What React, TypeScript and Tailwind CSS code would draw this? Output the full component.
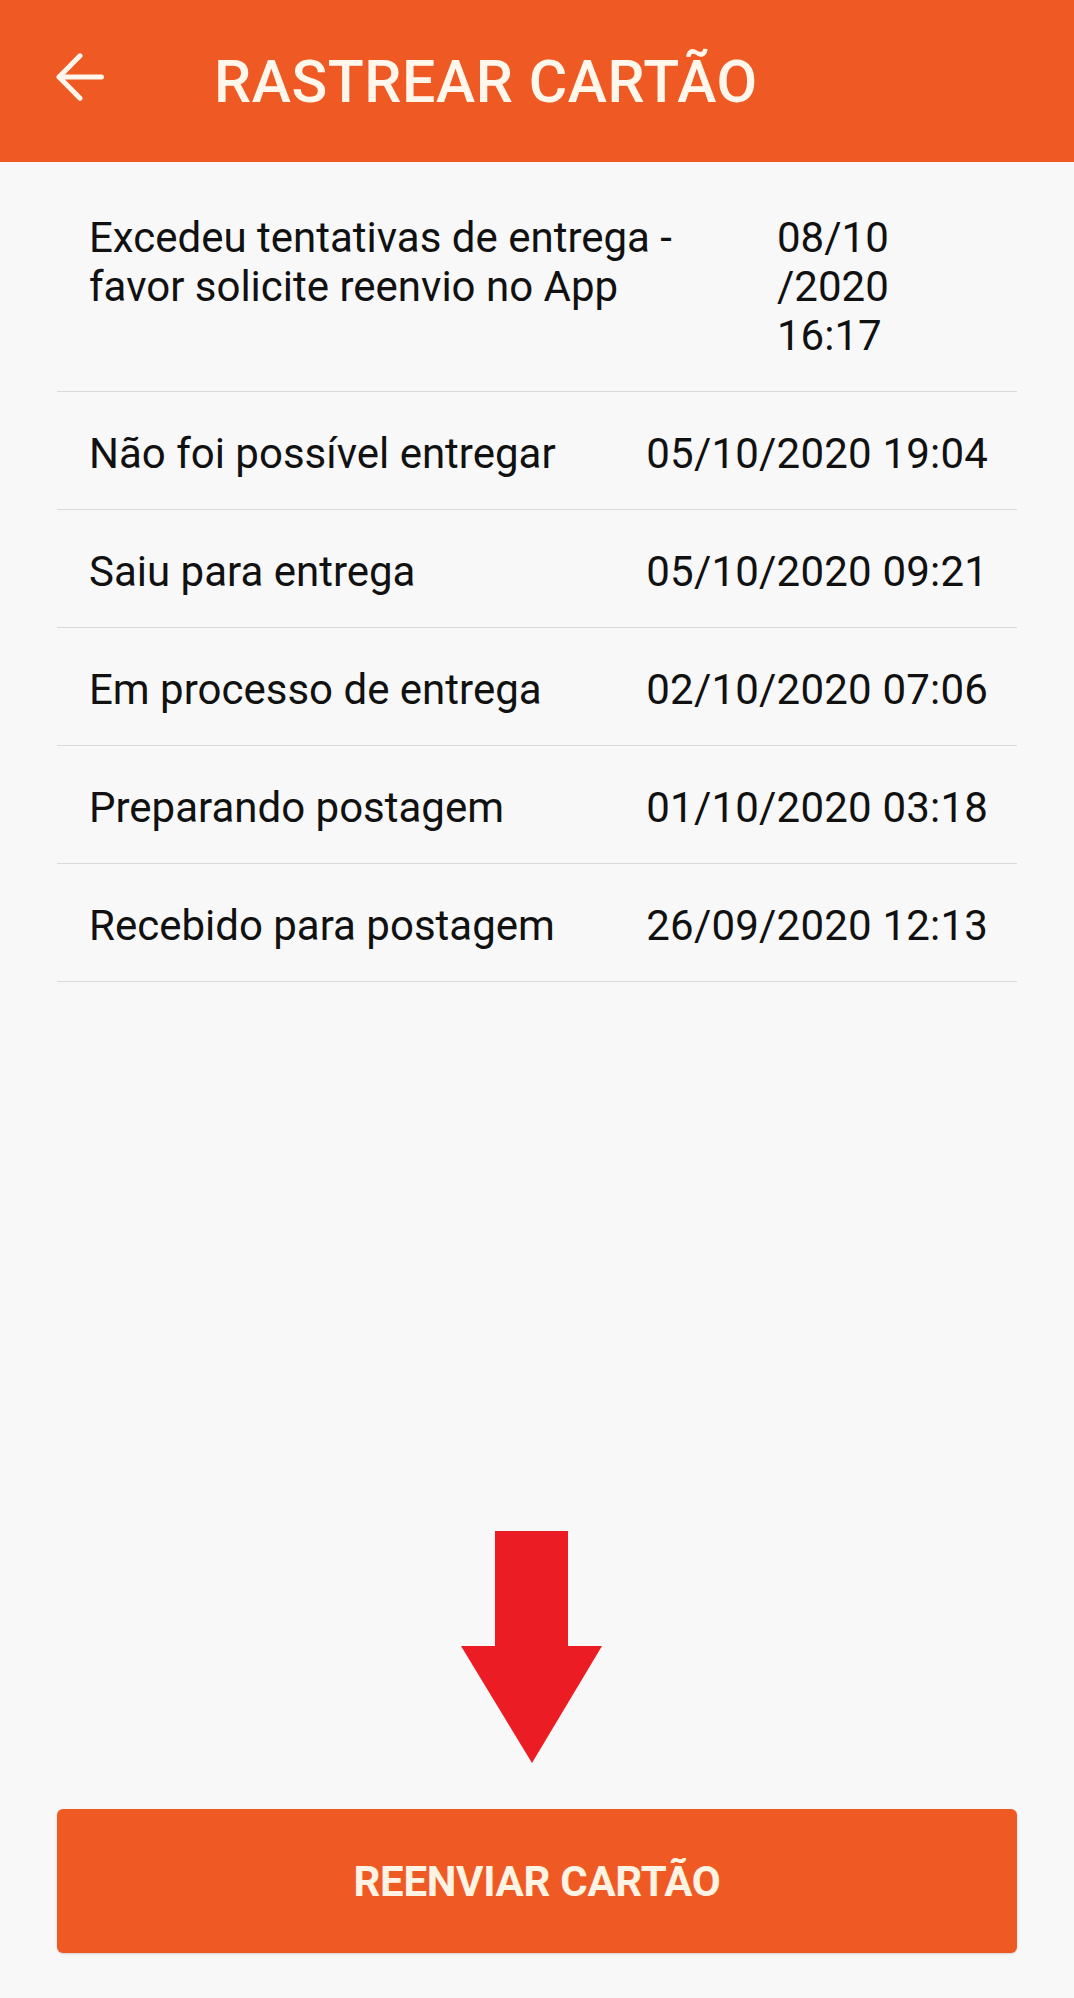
import React from 'react';

type Evento = {
  descricao: string;
  data: string;
};

const eventos: Evento[] = [
  { descricao: 'Não foi possível entregar', data: '05/10/2020 19:04' },
  { descricao: 'Saiu para entrega', data: '05/10/2020 09:21' },
  { descricao: 'Em processo de entrega', data: '02/10/2020 07:06' },
  { descricao: 'Preparando postagem', data: '01/10/2020 03:18' },
  { descricao: 'Recebido para postagem', data: '26/09/2020 12:13' },
];

const BackArrow = () => (
  <svg width="48" height="48" viewBox="0 0 48 48" fill="none" className="shrink-0 -mt-[8px]">
    <path
      d="M3 24H45.5M24 2.8 3 24l21 21.2"
      stroke="#FFF6EC"
      strokeWidth="5"
      strokeLinecap="round"
      strokeLinejoin="round"
    />
  </svg>
);

const DownArrow = () => (
  <svg width="141" height="232" viewBox="0 0 141 232">
    <polygon points="34,0 107,0 107,115 141,115 71,232 0,115 34,115" fill="#EC1C24" />
  </svg>
);

const App = () => {
  return (
    <div
      className="min-h-[1998px] w-[1074px] bg-[#F8F8F8] flex flex-col text-[#111111]"
      style={{ fontFamily: 'Roboto, "Noto Sans", sans-serif' }}
    >
      <header className="h-[162px] bg-[#EF5A24] flex items-center pl-[56px]">
        <BackArrow />
        <h1 className="ml-[110px] text-[59px] font-medium text-[#FFF6EC] leading-none tracking-[0.6px]">
          RASTREAR CARTÃO
        </h1>
      </header>

      <ul className="mt-[14px] mx-[57px]">
        <li className="flex pt-[37px] pb-[31px] pl-[32px] border-b border-[#D9D9D9] text-[42px] leading-[49px]">
          <div className="w-[688px] shrink-0">
            <span className="block">Excedeu tentativas de entrega -</span>
            <span className="block">favor solicite reenvio no App</span>
          </div>
          <div>
            <span className="block">08/10</span>
            <span className="block">/2020</span>
            <span className="block">16:17</span>
          </div>
        </li>
        {eventos.map((e) => (
          <li
            key={e.data}
            className="flex justify-between pt-[37px] pb-[31px] pl-[32px] pr-[29px] border-b border-[#D9D9D9] text-[42px] leading-[49px]"
          >
            <span>{e.descricao}</span>
            <span className="text-right tracking-[0.2px]">{e.data}</span>
          </li>
        ))}
      </ul>

      <div className="flex-1" />

      <div className="flex justify-center pr-[11px] mb-[46px]">
        <DownArrow />
      </div>

      <div className="mx-[57px] mb-[45px]">
        <button className="w-full h-[144px] rounded-[6px] bg-[#EF5A24] text-[#FFF3E3] text-[42px] font-bold tracking-[-0.3px] flex items-center justify-center shadow-[0_1px_2px_rgba(0,0,0,0.15)]">
          REENVIAR CARTÃO
        </button>
      </div>
    </div>
  );
};

export default App;
